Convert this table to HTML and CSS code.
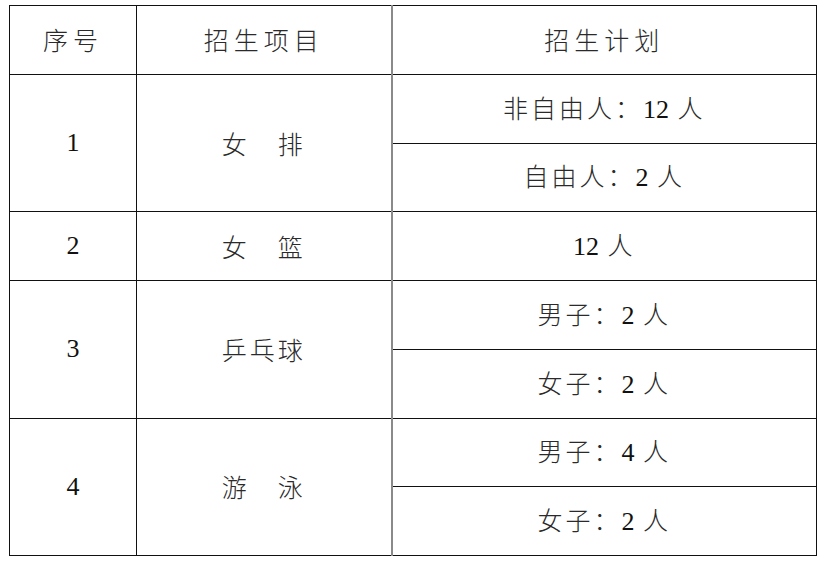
FILE: index.html
```html
<!DOCTYPE html>
<html lang="zh-CN">
<head>
<meta charset="utf-8">
<title>招生计划</title>
<link rel="stylesheet" href="styles.css">
</head>
<body>
<table class="plan">
  <colgroup>
    <col class="c-no">
    <col class="c-item">
    <col class="c-plan">
  </colgroup>
  <thead>
    <tr>
      <th>序号</th>
      <th>招生项目</th>
      <th class="div">招生计划</th>
    </tr>
  </thead>
  <tbody>
    <tr>
      <td rowspan="2" class="num">1</td>
      <td rowspan="2">女　排</td>
      <td class="div">非自由人：<span class="num">12</span> 人</td>
    </tr>
    <tr>
      <td class="div">自由人：<span class="num">2</span> 人</td>
    </tr>
    <tr>
      <td class="num">2</td>
      <td>女　篮</td>
      <td class="div"><span class="num">12</span> 人</td>
    </tr>
    <tr>
      <td rowspan="2" class="num">3</td>
      <td rowspan="2">乒乓球</td>
      <td class="div">男子：<span class="num">2</span> 人</td>
    </tr>
    <tr>
      <td class="div">女子：<span class="num">2</span> 人</td>
    </tr>
    <tr>
      <td rowspan="2" class="num">4</td>
      <td rowspan="2">游　泳</td>
      <td class="div">男子：<span class="num">4</span> 人</td>
    </tr>
    <tr>
      <td class="div">女子：<span class="num">2</span> 人</td>
    </tr>
  </tbody>
</table>
</body>
</html>
```
FILE: styles.css
```css
html, body {
  margin: 0;
  padding: 0;
  background: #ffffff;
}

body {
  padding: 5px 0 0 9px;
}

.plan {
  border-collapse: collapse;
  table-layout: fixed;
  width: 807px;
  font-family: "Noto Sans CJK SC", sans-serif;
  font-weight: 300;
  font-size: 25px;
  color: #2a2a2a;
}

.c-no { width: 127px; }
.c-item { width: 255px; }
.c-plan { width: 425px; }

.plan th,
.plan td {
  border: 1px solid #111111;
  height: 67.75px;
  padding: 0;
  text-align: center;
  vertical-align: middle;
  font-weight: 300;
  letter-spacing: 3px;
  line-height: 1;
}

.plan th {
  letter-spacing: 5px;
}

.plan .num {
  font-family: "Liberation Serif", serif;
  font-weight: 400;
  font-size: 26px;
  letter-spacing: 0;
  color: #111111;
}

.plan .div {
  border-left: 2px solid #8a8a8a;
}
```
